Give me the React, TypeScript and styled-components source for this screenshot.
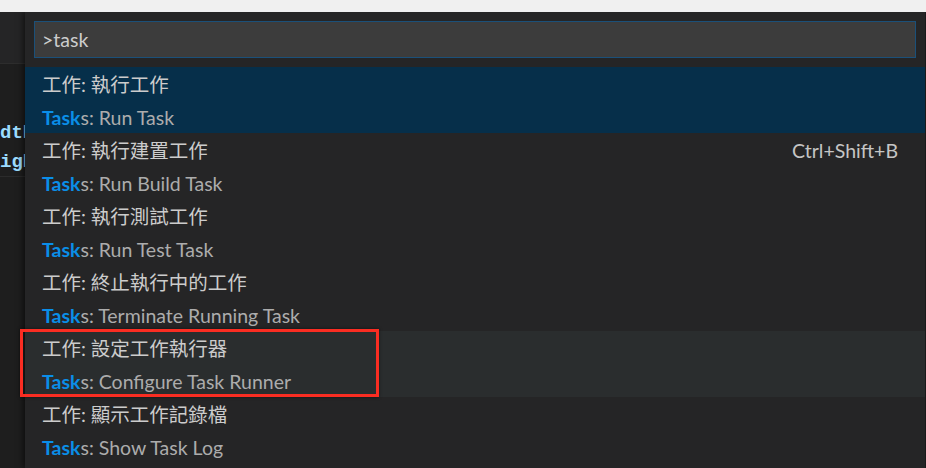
import React from "react";
import styled, { createGlobalStyle } from "styled-components";

const Global = createGlobalStyle`
  html, body { margin: 0; padding: 0; background: #1e1e1e; }
  body { width: 926px; height: 468px; overflow: hidden; }
`;

const Page = styled.div`
  position: relative;
  width: 926px;
  height: 468px;
  display: flex;
  flex-direction: column;
  overflow: hidden;
  font-family: Lato, "Noto Sans CJK TC", sans-serif;
`;

const TopStrip = styled.div`
  height: 12px;
  flex: none;
  background: #f0f0f0;
  position: relative;
  z-index: 2;
`;

const Main = styled.div`
  flex: 1;
  display: flex;
  min-height: 0;
`;

const Editor = styled.div`
  width: 25px;
  flex: none;
  display: flex;
  flex-direction: column;
  overflow: hidden;
  background: #1e1e1e;
`;

const TabBar = styled.div`
  height: 51px;
  flex: none;
  background: #252526;
  border-bottom: 1px solid #2d2d2d;
`;

const CodeArea = styled.div`
  height: 113px;
  flex: none;
  display: flex;
  flex-direction: column;
  padding-top: 55px;
  box-sizing: border-box;
  border-bottom: 1px solid #2b2b2b;
`;

const CodeLine = styled.div`
  height: 29px;
  line-height: 29px;
  font-family: "Liberation Mono", monospace;
  font-weight: bold;
  font-size: 19px;
  color: #9cdcfe;
  white-space: nowrap;
`;

const Widget = styled.div`
  flex: 1;
  display: flex;
  flex-direction: column;
  background: #252526;
  box-shadow: -2px 0 6px rgba(0, 0, 0, 0.55);
  padding-top: 9px;
  margin-right: 1px;
  z-index: 1;
`;

const InputBox = styled.div`
  height: 37px;
  margin: 0 9px 9px 9px;
  box-sizing: border-box;
  background: #3c3c3c;
  border: 1px solid #1b5079;
  display: flex;
  align-items: center;
  padding-left: 7px;
  font-size: 19.5px;
  color: #cccccc;
`;

const List = styled.div`
  display: flex;
  flex-direction: column;
`;

const Row = styled.div<{ $state?: "selected" | "hover" }>`
  height: 66px;
  flex: none;
  display: flex;
  align-items: flex-start;
  padding: 0 27px 0 17px;
  background: ${(p) =>
    p.$state === "selected" ? "#062f4a" : p.$state === "hover" ? "#2a2d2e" : "transparent"};
`;

const Texts = styled.div`
  flex: 1;
  display: flex;
  flex-direction: column;
`;

const Label = styled.div`
  height: 33px;
  line-height: 35px;
  font-size: 19.5px;
  color: #cccccc;
  white-space: nowrap;
`;

const Detail = styled.div`
  height: 33px;
  line-height: 35px;
  font-size: 19.5px;
  color: #acacac;
  white-space: nowrap;
`;

const Highlight = styled.span`
  color: #0a8ee8;
  font-weight: bold;
`;

const Keybinding = styled.div`
  height: 33px;
  line-height: 35px;
  font-size: 19.5px;
  color: #c5c5c5;
`;

const Annotation = styled.div`
  position: absolute;
  left: 20px;
  top: 329px;
  width: 359px;
  height: 68px;
  box-sizing: border-box;
  border: 3px solid #fa2d22;
  box-shadow: 0 0 3px rgba(0, 0, 0, 0.5);
  pointer-events: none;
  z-index: 2;
`;

type Item = { label: string; rest: string; key?: string; state?: "selected" | "hover" };

const items: Item[] = [
  { label: "工作: 執行工作", rest: "s: Run Task", state: "selected" },
  { label: "工作: 執行建置工作", rest: "s: Run Build Task", key: "Ctrl+Shift+B" },
  { label: "工作: 執行測試工作", rest: "s: Run Test Task" },
  { label: "工作: 終止執行中的工作", rest: "s: Terminate Running Task" },
  { label: "工作: 設定工作執行器", rest: "s: Configure Task Runner", state: "hover" },
  { label: "工作: 顯示工作記錄檔", rest: "s: Show Task Log" },
];

export default function App() {
  return (
    <Page>
      <Global />
      <TopStrip />
      <Main>
        <Editor>
          <TabBar />
          <CodeArea>
            <CodeLine>dth</CodeLine>
            <CodeLine>igh</CodeLine>
          </CodeArea>
        </Editor>
        <Widget>
          <InputBox>&gt;task</InputBox>
          <List>
            {items.map((it) => (
              <Row key={it.label} $state={it.state}>
                <Texts>
                  <Label>{it.label}</Label>
                  <Detail>
                    <Highlight>Task</Highlight>
                    {it.rest}
                  </Detail>
                </Texts>
                {it.key && <Keybinding>{it.key}</Keybinding>}
              </Row>
            ))}
          </List>
        </Widget>
      </Main>
      <Annotation />
    </Page>
  );
}
